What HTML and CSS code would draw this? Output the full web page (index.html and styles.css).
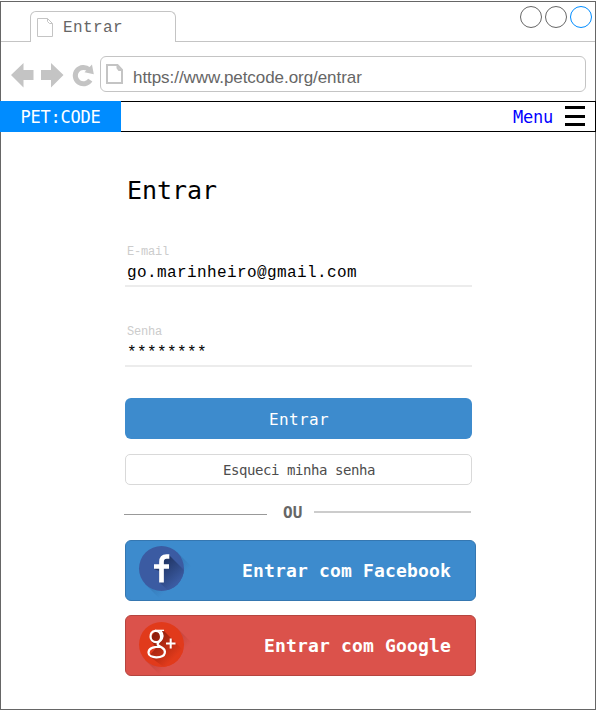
FILE: index.html
```html
<!DOCTYPE html>
<html lang="pt-BR">
<head>
<meta charset="utf-8">
<title>Entrar</title>
<link rel="stylesheet" href="styles.css">
</head>
<body>
<div class="window">
  <header class="tabs">
    <div class="tab">
      <svg class="tab-icon" width="18" height="20" viewBox="0 0 18 20"><path d="M.5 .5H10.500L15.500 5.500V18.500H.5ZM10.500 .5V3.500L12.500 5.500H15.500" fill="none" stroke="#c4c4c4"/></svg>
      <span>Entrar</span>
    </div>
    <div class="controls"><i class="dot"></i><i class="dot"></i><i class="dot dot-active"></i></div>
  </header>
  <div class="toolbar">
    <svg class="nav-icons" width="84" height="26" viewBox="0 0 84 26" fill="#c4c4c4">
      <path d="M0 13L12.500 1V8H22.500V18H12.500V25.500Z"/>
      <path d="M52.500 13L40 1V8H30V18H40V25.500Z"/>
      <path d="M79.300 18.200A8.200 8.200 0 1 1 78 7.500" fill="none" stroke="#c4c4c4" stroke-width="5"/>
      <path d="M81 2.500L82.800 12.300L73.500 10.200Z"/>
    </svg>
    <div class="address">
      <svg width="18" height="21" viewBox="0 0 18 21"><path d="M1 1H11.500L16 6V19H1ZM11.500 1V4L13 6H16" fill="none" stroke="#c4c4c4" stroke-width="2"/></svg>
      <span>https://www.petcode.org/entrar</span>
    </div>
  </div>
  <nav class="navbar">
    <a class="brand">PET:CODE</a>
    <a class="menu">Menu<span class="bars"><i></i><i></i><i></i></span></a>
  </nav>
  <main class="login">
    <h1>Entrar</h1>
    <div class="field"><label>E-mail</label><div class="value">go.marinheiro@gmail.com</div></div>
    <div class="field"><label>Senha</label><div class="value">********</div></div>
    <button class="submit">Entrar</button>
    <button class="forgot">Esqueci minha senha</button>
    <div class="divider"><i class="rule-left"></i><b>OU</b><i class="rule-right"></i></div>
    <button class="social facebook">
      <svg width="56" height="56" viewBox="0 0 56 56">
        <defs>
          <linearGradient id="fbout" x1="22" y1="22" x2="38" y2="38" gradientUnits="userSpaceOnUse"><stop offset=".5" stop-color="#285a92" stop-opacity=".25"/><stop offset="1" stop-color="#285a92" stop-opacity="0"/></linearGradient>
          <linearGradient id="fbin" x1="24" y1="20" x2="40" y2="38" gradientUnits="userSpaceOnUse"><stop offset="0" stop-color="#223768"/><stop offset="1" stop-color="#3b5ba2"/></linearGradient>
          <clipPath id="fbclip"><circle cx="23.500" cy="24.500" r="22.500"/></clipPath>
        </defs>
        <path d="M39.500 8.500L54 23L22 55L7.500 40.500Z" fill="url(#fbout)"/>
        <circle cx="23.500" cy="24.500" r="22.500" fill="#3b5ba2"/>
        <path d="M31 11L55 35L38 54L21 38V27L16 25L22 20Z" fill="url(#fbin)" clip-path="url(#fbclip)"/>
        <path d="M31.300 12.500H28.500Q23.500 12.500 23.500 18V38.500M16 22.500H31" fill="none" stroke="#fff" stroke-width="4.700"/>
      </svg>
      <span>Entrar com Facebook</span>
    </button>
    <button class="social google">
      <svg width="56" height="56" viewBox="0 0 56 56">
        <defs>
          <linearGradient id="gout" x1="22" y1="22" x2="38" y2="38" gradientUnits="userSpaceOnUse"><stop offset=".5" stop-color="#a83028" stop-opacity=".3"/><stop offset="1" stop-color="#a83028" stop-opacity="0"/></linearGradient>
          <linearGradient id="gin" x1="16" y1="14" x2="38" y2="36" gradientUnits="userSpaceOnUse"><stop offset="0" stop-color="#8b1c0b"/><stop offset="1" stop-color="#e13a1b"/></linearGradient>
          <clipPath id="gclip"><circle cx="23.500" cy="24.500" r="22.500"/></clipPath>
        </defs>
        <path d="M39.500 8.500L54 23L22 55L7.500 40.500Z" fill="url(#gout)"/>
        <circle cx="23.500" cy="24.500" r="22.500" fill="#e13a1b"/>
        <path d="M25 10L50 35L35 54L11 36L18 28L12 19L17 11Z" fill="url(#gin)" clip-path="url(#gclip)"/>
        <g fill="none" stroke="#fff">
          <path d="M17.200 10.900C10.500 11.400 11 22.400 18.500 22.200C25.500 21.400 24 10.400 17.200 10.900" stroke-width="2.200"/>
          <path d="M17 10.400H26" stroke-width="1.400"/>
          <path d="M22.500 11Q26.500 16 22.500 20.500Q18 24 20.500 25.500L24.500 28Q27.500 30 26.800 33C25.500 39 10.500 38.500 10.500 32.800C10.500 28 16 26.700 22.500 26.700" stroke-width="2.200"/>
          <path d="M28 23.500H37.500M32.700 18.500V28.500" stroke-width="2"/>
        </g>
      </svg>
      <span>Entrar com Google</span>
    </button>
  </main>
</div>
</body>
</html>
```
FILE: styles.css
```css
* { box-sizing: border-box; }
body { margin: 0; background: #fff; font-family: "DejaVu Sans Mono", monospace; }
svg { display: block; flex: none; }
button { display: block; margin: 0; padding: 0; font-family: inherit; }
.window { width: 596px; height: 709px; margin-top: 1px; border: 1px solid #666; }

.tabs { height: 40px; border-bottom: 1px solid #c4c4c4; display: flex; justify-content: space-between; padding-left: 29px; }
.tab { width: 146px; height: 31px; margin-top: 9px; border: 1px solid #c4c4c4; border-bottom: 0; border-radius: 6px 6px 0 0; background: #fff; display: flex; align-items: flex-start; padding: 6px 0 0 6px; font: 16px/21px "Liberation Mono", monospace; letter-spacing: .4px; color: #666; }
.tab span { margin-left: 8px; }
.controls { display: flex; gap: 3px; margin: 4px 3px 0 0; }
.dot { width: 22px; height: 22px; border: 1px solid #666; border-radius: 50%; }
.dot-active { border-color: #008cff; }

.toolbar { height: 59px; display: flex; padding: 14px 9px 0 10px; }
.nav-icons { margin-top: 6px; }
.address { width: 486px; height: 36px; margin-left: 5px; border: 1px solid #c4c4c4; border-radius: 6px; display: flex; padding: 7px 0 0 5px; font: 17px/27px "Liberation Sans", sans-serif; letter-spacing: -.06px; color: #666; }
.address span { margin-left: 9px; }

.navbar { height: 31px; margin: 0 -1px; border: 1px solid #000; display: flex; justify-content: space-between; }
.brand { width: 121px; height: 31px; margin: -1px 0 0 -1px; background: #008cff; color: #fff; font-size: 17px; line-height: 33px; text-align: center; letter-spacing: -.23px; }
.menu { display: flex; color: #00f; font-size: 17px; line-height: 31px; letter-spacing: -.23px; }
.bars { width: 20px; margin: 4px 10px 0 12px; display: flex; flex-direction: column; gap: 5.500px; }
.bars i { height: 3px; background: #000; }

.login { margin-left: 124px; width: 351px; }
h1 { margin: 0; padding: 44px 0 0 2px; height: 112px; font-size: 25px; line-height: 30px; font-weight: 400; letter-spacing: -.05px; }
.field { width: 347px; height: 43px; margin-bottom: 37px; padding-left: 2px; border-bottom: 2px solid #ececec; font-family: "Liberation Mono", monospace; }
.field label { display: block; font-size: 12px; line-height: 16px; letter-spacing: -.2px; color: #ccc; }
.value { font-size: 16px; line-height: 26px; letter-spacing: .4px; color: #000; }
.submit { width: 347px; height: 41px; margin-top: -6px; padding: 2px 0 0 1px; border: 0; border-radius: 6px; background: #3d8bcd; color: #fff; font-size: 16px; letter-spacing: .37px; }
.forgot { width: 347px; height: 31px; margin-top: 15px; padding-left: 1px; border: 1px solid #d9d9d9; border-radius: 5px; background: #fff; color: #4d4d4d; font-size: 14px; letter-spacing: -.43px; }
.divider { display: flex; align-items: center; height: 55px; width: 347px; margin-left: -1px; color: #666; font-size: 16px; }
.rule-left { width: 143px; height: 1px; margin-top: 4px; background: #999; }
.divider b { width: 47px; padding-left: 16px; }
.rule-right { width: 157px; height: 2px; margin-top: -2px; background: #ccc; }
.social { width: 351px; height: 61px; margin-bottom: 14px; border: 1px solid; border-radius: 6px; color: #fff; font-size: 18px; font-weight: 700; letter-spacing: .16px; display: flex; align-items: center; justify-content: space-between; padding: 0 24px 0 12px; }
.social svg { margin-top: 2px; }
.google svg { margin-top: 4px; }
.facebook { background: #3d8bcd; border-color: #3577b1; }
.google { background: #db524b; border-color: #b5453f; }
```
